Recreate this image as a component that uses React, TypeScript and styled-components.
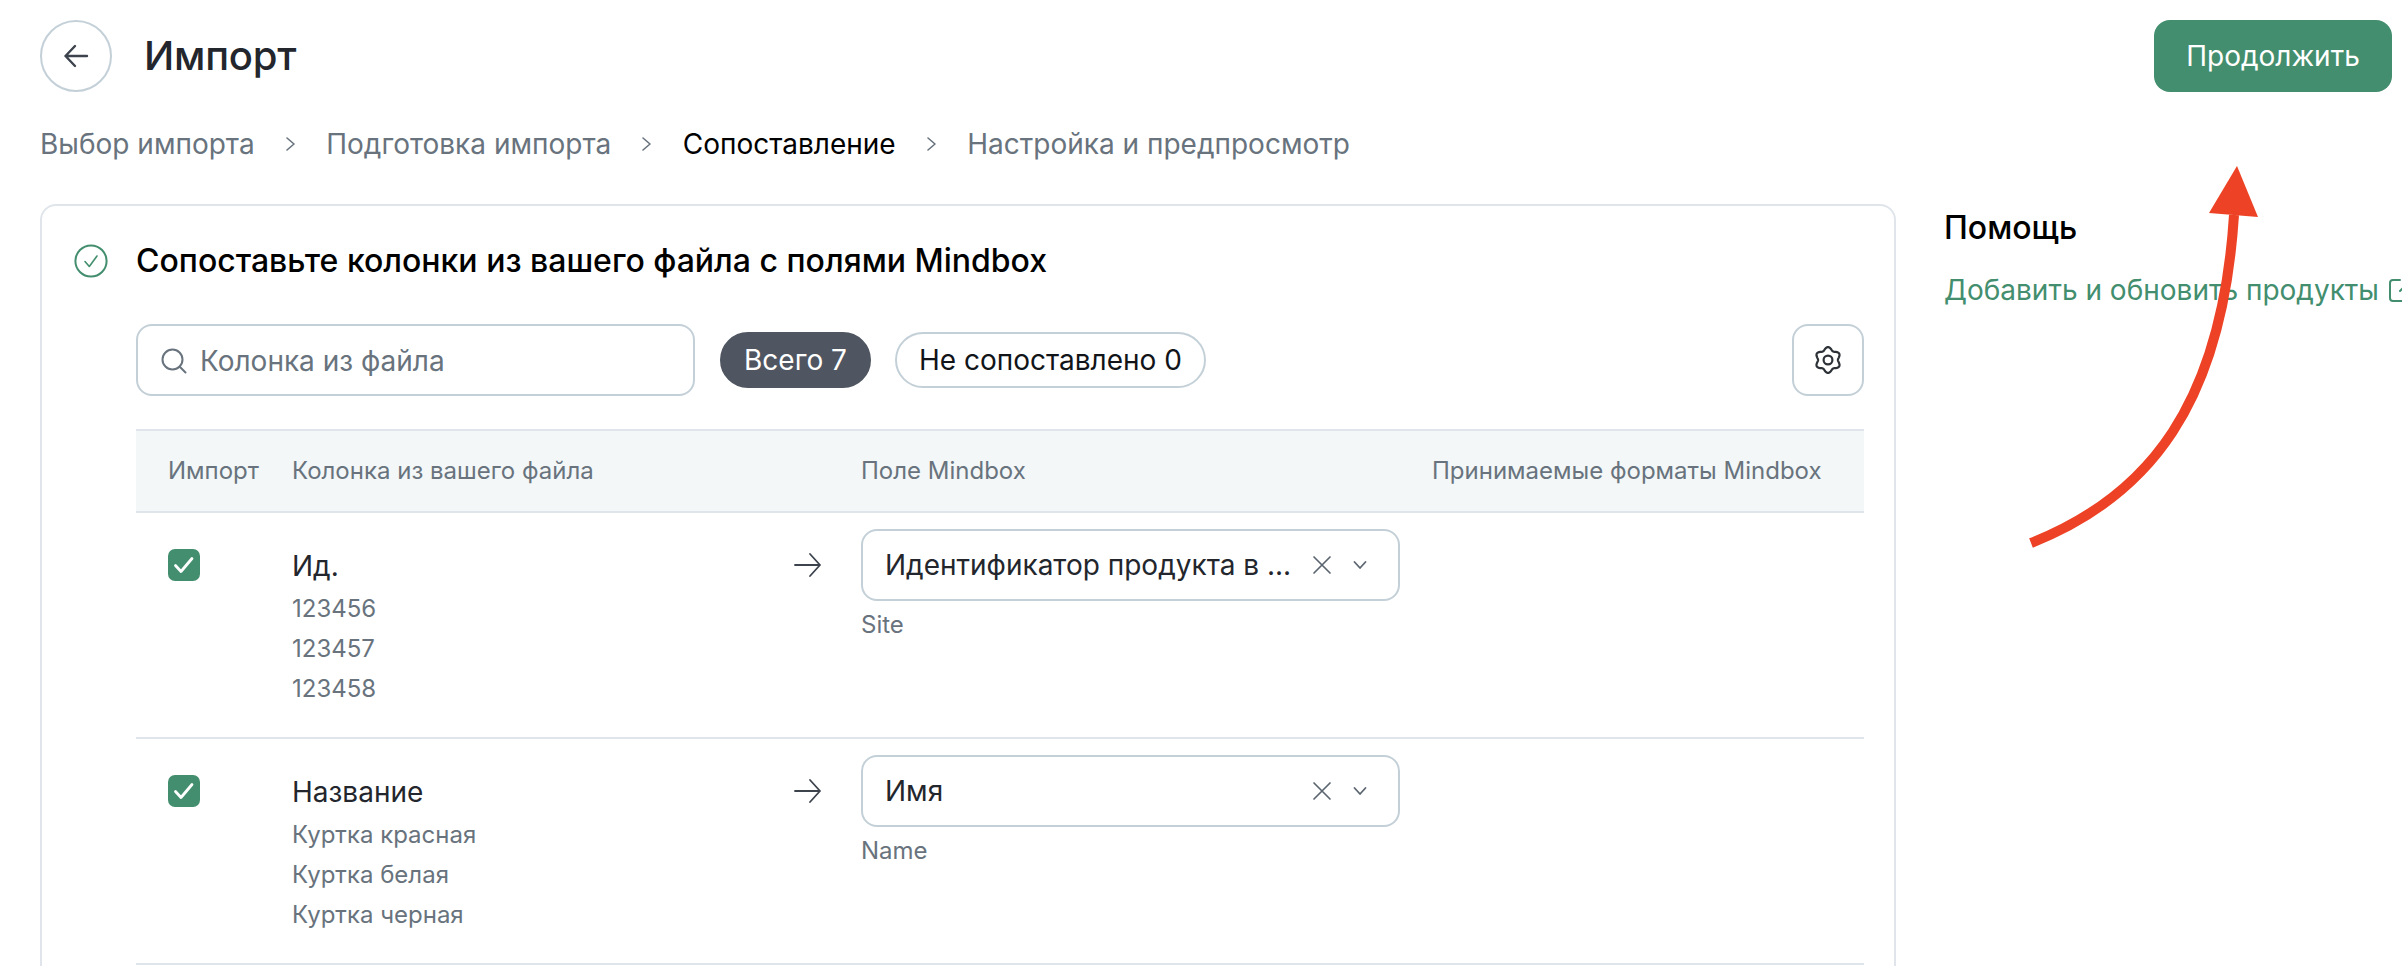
import React from "react";
import styled, { createGlobalStyle } from "styled-components";

const Global = createGlobalStyle`
  html, body { margin: 0; padding: 0; background: #fff; overflow: hidden; }
  * { box-sizing: border-box; }
`;

const Page = styled.div`
  position: relative;
  width: 2402px;
  height: 966px;
  overflow: hidden;
  background: #fff;
  font-family: Inter, "Noto Sans", sans-serif;
  font-size: 28px;
  line-height: 40px;
  color: #23262c;
`;
const Header = styled.header`
  display: flex;
  align-items: center;
  height: 72px;
  margin: 20px 10px 0 40px;
`;
const BackButton = styled.button`
  display: flex;
  align-items: center;
  justify-content: center;
  width: 72px;
  height: 72px;
  padding: 0;
  border: 2px solid #c4d0d8;
  border-radius: 50%;
  background: #fff;
`;
const Title = styled.h1`
  flex: 1;
  margin: 0 0 0 32px;
  font-size: 40px;
  line-height: 48px;
  font-weight: 500;
  letter-spacing: -0.2px;
  color: #23262c;
`;
const PrimaryButton = styled.button`
  width: 238px;
  height: 72px;
  border: none;
  border-radius: 16px;
  background: #428e6e;
  color: #fff;
  font: inherit;
`;
const Steps = styled.nav`
  display: flex;
  align-items: center;
  gap: 28.3px;
  height: 40px;
  margin: 32px 0 0 40px;
`;
const Step = styled.span<{ $active?: boolean }>`
  color: ${(p) => (p.$active ? "#000" : "#68737d")};
`;
const Content = styled.div`
  display: flex;
  align-items: flex-start;
  gap: 48px;
  margin: 40px 0 0 40px;
`;
const Card = styled.section`
  flex: none;
  width: 1856px;
  height: 800px;
  padding: 35px 30px 0 32px;
  border: 2px solid #dfe5ea;
  border-radius: 16px;
`;
const CardTitle = styled.div`
  display: flex;
  align-items: center;
  gap: 28px;
  height: 40px;
  font-size: 32px;
  font-weight: 500;
  color: #000;
`;
const CardBody = styled.div`
  margin: 43px 0 0 62px;
`;
const Filters = styled.div`
  display: flex;
  align-items: center;
  height: 72px;
`;
const Search = styled.div`
  display: flex;
  align-items: center;
  gap: 12px;
  width: 559px;
  height: 72px;
  padding: 2px 22px 0;
  border: 2px solid #c4d0d8;
  border-radius: 16px;
  color: #68737d;
`;
const Pill = styled.span<{ $dark?: boolean }>`
  display: flex;
  align-items: center;
  height: 56px;
  padding: 0 22px;
  border-radius: 28px;
  border: 2px solid ${(p) => (p.$dark ? "#4f5661" : "#c4d0d8")};
  background: ${(p) => (p.$dark ? "#4f5661" : "#fff")};
  color: ${(p) => (p.$dark ? "#fff" : "#111418")};
  margin-left: ${(p) => (p.$dark ? "25px" : "24px")};
`;
const IconButton = styled.button`
  display: flex;
  align-items: center;
  justify-content: center;
  width: 72px;
  height: 72px;
  margin-left: auto;
  padding: 0;
  border: 2px solid #c4d0d8;
  border-radius: 16px;
  background: #fff;
`;
const Table = styled.div`
  margin-top: 33px;
  width: 1728px;
`;
const columns = "124px 569px 571px 1fr";
const HeadRow = styled.div`
  display: grid;
  grid-template-columns: ${columns};
  align-items: center;
  height: 84px;
  padding-left: 32px;
  background: #f3f7f8;
  border-top: 2px solid #dfe5ea;
  border-bottom: 2px solid #dfe5ea;
  font-size: 24px;
  color: #68737d;
`;
const Row = styled.div`
  display: grid;
  grid-template-columns: ${columns};
  align-items: start;
  height: 226px;
  padding: 16px 0 0 32px;
  border-bottom: 2px solid #dfe5ea;
`;
const Check = styled.span`
  display: flex;
  align-items: center;
  justify-content: center;
  width: 32px;
  height: 32px;
  margin-top: 20px;
  border-radius: 7px;
  background: #428e6e;
`;
const SourceColumn = styled.div`
  padding-top: 17px;
`;
const SourceName = styled.div`
  color: #23262c;
`;
const Samples = styled.div`
  margin-top: 3px;
  font-size: 24px;
  line-height: 40px;
  color: #68737d;
`;
const TargetCell = styled.div`
  display: grid;
  grid-template-columns: 69px 539px;
  margin-left: -69px;
  width: 608px;
  align-items: start;
`;
const ArrowWrap = styled.span`
  display: flex;
  align-items: center;
  height: 72px;
  padding-left: 2px;
`;
const SelectBox = styled.div`
  display: flex;
  align-items: center;
  width: 539px;
  height: 72px;
  padding: 0 30px 0 22px;
  border: 2px solid #c4d0d8;
  border-radius: 16px;
`;
const SelectValue = styled.span`
  flex: 1;
  white-space: nowrap;
  overflow: hidden;
`;
const SelectIcons = styled.span`
  display: flex;
  align-items: center;
  gap: 20px;
`;
const FieldKey = styled.div`
  grid-column: 2;
  margin-top: 4px;
  font-size: 24px;
  line-height: 40px;
  color: #68737d;
`;
const Aside = styled.aside`
  flex: none;
  width: 500px;
  padding-top: 4px;
`;
const AsideTitle = styled.div`
  font-size: 32px;
  font-weight: 500;
  color: #000;
`;
const HelpLink = styled.a`
  display: flex;
  align-items: center;
  gap: 9px;
  margin-top: 22px;
  color: #428e6e;
  white-space: nowrap;
`;
const Annotation = styled.svg`
  position: absolute;
  left: 0;
  top: 0;
  pointer-events: none;
`;

const I = { fill: "none", stroke: "currentColor", strokeLinecap: "round", strokeLinejoin: "round" } as const;

const gearOutline =
  Array.from({ length: 144 }, (_, i) => {
    const a = (i / 144) * Math.PI * 2;
    const r = 11.4 + 1.5 * Math.cos(6 * a);
    const x = 14 + r * Math.sin(a);
    const y = 14 - r * Math.cos(a);
    return `${i === 0 ? "M" : "L"}${x.toFixed(2)} ${y.toFixed(2)}`;
  }).join("") + "Z";

const ArrowLeft = () => (
  <svg width="28" height="28" viewBox="0 0 28 28" {...I} color="#3d434c" strokeWidth="2.4">
    <path d="M25 14H3.5M13 4 3.5 14 13 24" />
  </svg>
);
const ArrowRight = () => (
  <svg width="28" height="28" viewBox="0 0 28 28" {...I} color="#3d434c" strokeWidth="1.8">
    <path d="M1 14h25M16 3l10 11-10 11" />
  </svg>
);
const Chevron = () => (
  <svg width="15" height="24" viewBox="0 0 15 24" {...I} color="#68737d" strokeWidth="1.6">
    <path d="m4 6 7 6-7 6" />
  </svg>
);
const ChevronDown = () => (
  <svg width="16" height="16" viewBox="0 0 16 16" {...I} color="#5b6570" strokeWidth="1.8">
    <path d="m2.5 5 5.5 6 5.5-6" />
  </svg>
);
const Close = () => (
  <svg width="20" height="20" viewBox="0 0 20 20" {...I} color="#5b6570" strokeWidth="1.7">
    <path d="m2 2 16 16M18 2 2 18" />
  </svg>
);
const Tick = () => (
  <svg width="22" height="22" viewBox="0 0 22 22" {...I} color="#fff" strokeWidth="2.8">
    <path d="m2.5 11.5 5.5 6L19 4.5" />
  </svg>
);
const DoneCircle = () => (
  <svg width="34" height="34" viewBox="0 0 34 34" {...I} color="#428e6e" strokeWidth="2">
    <circle cx="17" cy="17" r="15.6" />
    <path d="m11 17.5 4.3 5L23 12" strokeWidth="1.6" />
  </svg>
);
const SearchIcon = () => (
  <svg width="28" height="28" viewBox="0 0 28 28" {...I} color="#68737d" strokeWidth="2">
    <circle cx="12.5" cy="12.5" r="10" />
    <path d="m20 20 5.5 5.5" />
  </svg>
);
const Gear = () => (
  <svg width="28" height="28" viewBox="0 0 28 28" {...I} color="#2d3238" strokeWidth="2.2">
    <path d={gearOutline} />
    <circle cx="14" cy="14" r="4.4" />
  </svg>
);
const External = () => (
  <svg width="26" height="26" viewBox="0 0 26 26" {...I} color="#428e6e" strokeWidth="2">
    <path d="M12 3H5a3 3 0 0 0-3 3v15a3 3 0 0 0 3 3h15a3 3 0 0 0 3-3v-7M12 14 24 2M17 2h7v7" />
  </svg>
);

const rows = [
  { name: "Ид.", samples: ["123456", "123457", "123458"], value: "Идентификатор продукта в ...", key: "Site" },
  { name: "Название", samples: ["Куртка красная", "Куртка белая", "Куртка черная"], value: "Имя", key: "Name" },
];

export default function App() {
  return (
    <Page>
      <Global />
      <Header>
        <BackButton aria-label="Назад">
          <ArrowLeft />
        </BackButton>
        <Title>Импорт</Title>
        <PrimaryButton>Продолжить</PrimaryButton>
      </Header>
      <Steps>
        <Step>Выбор импорта</Step>
        <Chevron />
        <Step>Подготовка импорта</Step>
        <Chevron />
        <Step $active>Сопоставление</Step>
        <Chevron />
        <Step>Настройка и предпросмотр</Step>
      </Steps>
      <Content>
        <Card>
          <CardTitle>
            <DoneCircle />
            Сопоставьте колонки из вашего файла с полями Mindbox
          </CardTitle>
          <CardBody>
            <Filters>
              <Search>
                <SearchIcon />
                Колонка из файла
              </Search>
              <Pill $dark>Всего 7</Pill>
              <Pill>Не сопоставлено 0</Pill>
              <IconButton aria-label="Настройки">
                <Gear />
              </IconButton>
            </Filters>
            <Table>
              <HeadRow>
                <span>Импорт</span>
                <span>Колонка из вашего файла</span>
                <span>Поле Mindbox</span>
                <span>Принимаемые форматы Mindbox</span>
              </HeadRow>
              {rows.map((r) => (
                <Row key={r.key}>
                  <Check>
                    <Tick />
                  </Check>
                  <SourceColumn>
                    <SourceName>{r.name}</SourceName>
                    <Samples>
                      {r.samples.map((s) => (
                        <div key={s}>{s}</div>
                      ))}
                    </Samples>
                  </SourceColumn>
                  <TargetCell>
                    <ArrowWrap>
                      <ArrowRight />
                    </ArrowWrap>
                    <SelectBox>
                      <SelectValue>{r.value}</SelectValue>
                      <SelectIcons>
                        <Close />
                        <ChevronDown />
                      </SelectIcons>
                    </SelectBox>
                    <FieldKey>{r.key}</FieldKey>
                  </TargetCell>
                  <span />
                </Row>
              ))}
            </Table>
          </CardBody>
        </Card>
        <Aside>
          <AsideTitle>Помощь</AsideTitle>
          <HelpLink>
            Добавить и обновить продукты
            <External />
          </HelpLink>
        </Aside>
      </Content>
      <Annotation width="2402" height="966" viewBox="0 0 2402 966">
        <path d="M2031 543C2150 496 2222 403 2234 215" fill="none" stroke="#ed4225" strokeWidth="10" />
        <path d="M2237 166 2209 213 2258 217Z" fill="#ed4225" />
      </Annotation>
    </Page>
  );
}
